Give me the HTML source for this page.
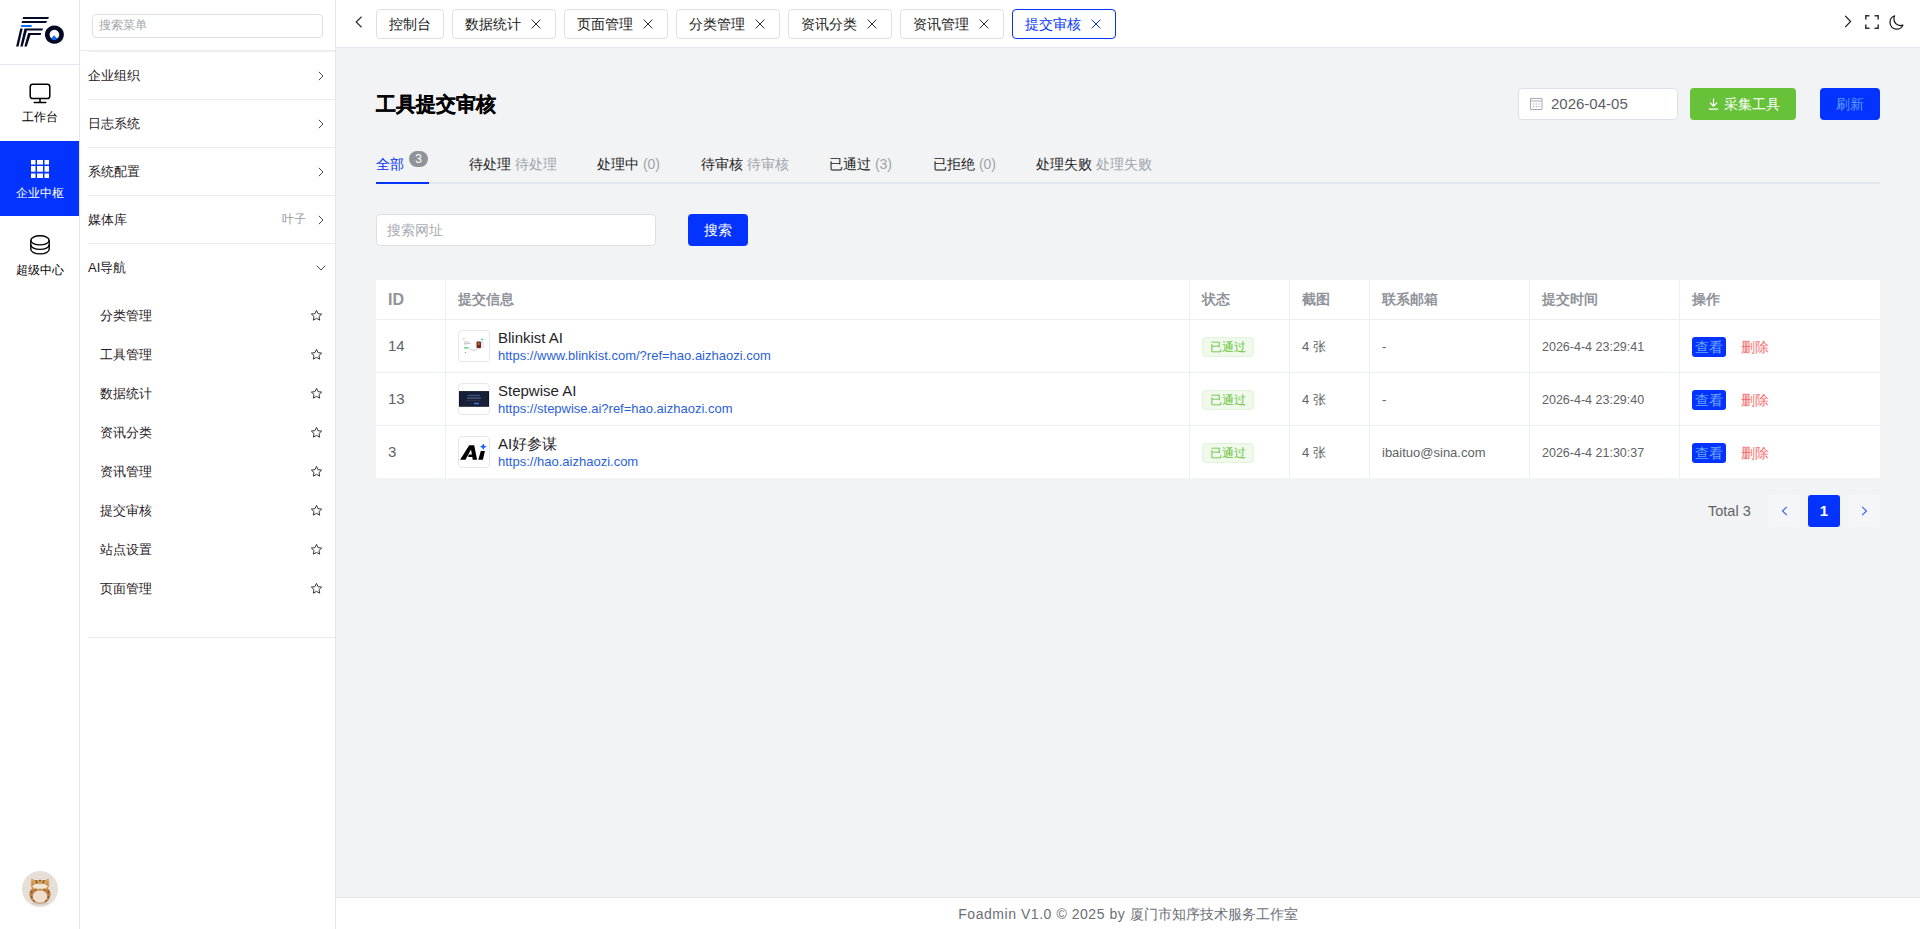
<!DOCTYPE html>
<html><head><meta charset="utf-8">
<style>
*{box-sizing:border-box;margin:0;padding:0}
html,body{width:1920px;height:929px;overflow:hidden}
body{position:relative;background:#f2f3f5;font-family:"Liberation Sans",sans-serif;color:#303133;font-size:14px}
.a{position:absolute}
.rail{left:0;top:0;width:80px;height:929px;background:#fff;border-right:1px solid #e4e6eb}
.rail .hr{left:0;top:64px;width:79px;height:1px;background:#e4e6eb}
.ri{left:0;width:79px;text-align:center;font-size:12px;color:#000;line-height:14px}
.ri.act{background:#0433ff;color:#fff}
.side{left:80px;top:0;width:256px;height:929px;background:#fff;border-right:1px solid #e4e6eb}
.sinput{left:12px;top:14px;width:231px;height:24px;border:1px solid #dcdfe6;border-radius:4px;font-size:12px;color:#a3a6ad;padding-left:6px;line-height:20px}
.shr{height:1px;background:#e9ebef}
.mi{left:8px;width:247px;font-size:13px;color:#1f2024;line-height:16px}
.chev{position:absolute}
.sub{left:20px;font-size:13px;color:#1f2024;line-height:16px}
.star{position:absolute;left:211px}
.hdr{left:336px;top:0;width:1584px;height:48px;background:#fff;border-bottom:1px solid #e4e6eb}
.tab{top:9px;height:30px;border:1px solid #dcdfe6;border-radius:4px;background:#fff;font-size:14px;line-height:28px;padding-left:12px;color:#1a1a1a;white-space:nowrap}
.tab.act{border-color:#0433ff;color:#0433ff}
.tab svg{position:absolute;top:9px}
.ftr{left:336px;top:897px;width:1584px;height:32px;background:#fff;border-top:1px solid #e4e6eb;text-align:center;font-size:14px;color:#6b6f76;line-height:32px}

.title{left:376px;top:92px;font-size:20px;font-weight:700;color:#000;line-height:24px;-webkit-text-stroke:0.25px #000}
.dp{left:1518px;top:88px;width:160px;height:32px;background:#fff;border:1px solid #dcdfe6;border-radius:4px}
.btn{height:32px;border-radius:4px;text-align:center;line-height:32px;font-size:14px}
.ct{top:156px;font-size:14px;line-height:16px;color:#222;white-space:nowrap}
.ct .g{color:#a0a3aa}
.tabline{left:376px;top:182px;width:1504px;height:2px;background:#e4e7ed}
.sin{left:376px;top:214px;width:280px;height:32px;background:#fff;border:1px solid #dcdfe6;border-radius:4px;font-size:14px;color:#a8abb2;line-height:30px;padding-left:10px}
.tbl{left:376px;top:280px;width:1504px;height:198px;background:#fff}
.vl{top:0;width:1px;height:198px;background:#ebeef5}
.hl{left:0;width:1504px;height:1px;background:#ebeef5}
.th{top:11px;font-size:14px;font-weight:700;color:#909399;line-height:16px}
.td{font-size:13px;color:#606266;line-height:16px;white-space:nowrap}
.thumb{left:82px;width:32px;height:32px;border:1px solid #e4e7ed;border-radius:4px;background:#fff;overflow:hidden}
.nm{left:122px;font-size:15px;color:#1f2329;line-height:18px;white-space:nowrap}
.url{left:122px;font-size:13px;color:#2b5fd9;line-height:16px;white-space:nowrap}
.tag{left:826px;width:52px;height:20px;background:#f0f9eb;border:1px solid #e1f3d8;border-radius:4px;color:#67c23a;font-size:12px;text-align:center;line-height:18px}
.vbtn{left:1316px;width:34px;height:20px;background:#0433ff;border-radius:3px;color:#6aa8ff;font-size:14px;text-align:center;line-height:20px}
.del{left:1365px;color:#f56c6c;font-size:14px;line-height:20px}
.pg{top:495px;width:32px;height:32px;border-radius:3px;text-align:center;line-height:32px}
</style></head><body>

<!-- rail -->
<div class="a rail">
  <svg class="a" style="left:0;top:0" width="79" height="64" viewBox="0 0 79 64">
    <g fill="#050a24">
      <path d="M23.2 17h25.8l-0.9 2h-25.6z"/>
      <path d="M22.2 21h24.8l-0.9 2h-24.6z"/>
      <path d="M20.3 28.6H22.7L18.5 46.4H16.1Z"/>
      <path d="M24.5 28.4H43.2L42.2 30.5H26.9L22.7 46.4H20.3Z"/>
      <path d="M28.1 33.1H41.3L40.6 34.9H30.5L26.8 46.4H24.4Z"/>
      <path fill-rule="evenodd" d="M54.4 25.5a9.5 9.1 0 1 1 -0.01 0zM54.4 29.8a4.8 4.8 0 1 0 0.01 0z"/>
    </g>
    <path fill="#0a6cff" d="M21.3 25h10.5l-0.3 2h-10.5z"/>
    <path fill="#0a6cff" d="M54.1 35.3l3.2 3.4a4.8 4.8 0 0 1 -6.4 0z"/>
  </svg>
  <div class="a hr"></div>

  <div class="a ri" style="top:76px;height:60px">
    <svg class="a" style="left:29px;top:83px;top:7px" width="22" height="21" viewBox="0 0 22 21">
      <rect x="1.2" y="1.2" width="19.6" height="14.3" rx="2.6" fill="none" stroke="#000" stroke-width="1.5"/>
      <path d="M11 15.5v4M5.2 19.4h11.6" stroke="#000" stroke-width="1.5" fill="none" stroke-linecap="round"/>
    </svg>
    <div class="a" style="left:0;top:34px;width:79px">工作台</div>
  </div>

  <div class="a ri act" style="top:141px;height:75px">
    <svg class="a" style="left:31px;top:19px" width="18" height="18" viewBox="0 0 18 18" fill="#fff">
      <rect x="0" y="0" width="4.5" height="4.5"/><rect x="6" y="0" width="6" height="4.5"/><rect x="13.5" y="0" width="4.5" height="4.5"/>
      <rect x="0" y="6" width="4.5" height="5.7"/><rect x="6" y="6" width="6" height="5.7"/><rect x="13.5" y="6" width="4.5" height="5.7"/>
      <rect x="0" y="13.5" width="4.5" height="4.5"/><rect x="6" y="13.5" width="6" height="4.5"/><rect x="13.5" y="13.5" width="4.5" height="4.5"/>
    </svg>
    <div class="a" style="left:0;top:45px;width:79px">企业中枢</div>
  </div>

  <div class="a ri" style="top:228px;height:60px">
    <svg class="a" style="left:29px;top:6px" width="22" height="22" viewBox="0 0 22 22">
      <g fill="none" stroke="#000" stroke-width="1.4">
        <ellipse cx="11" cy="6.3" rx="9.2" ry="4.6"/>
        <path d="M1.8 6.3v9c0 2.5 4.1 4.6 9.2 4.6s9.2-2.1 9.2-4.6v-9"/>
        <path d="M1.8 10.8c0 2.5 4.1 4.6 9.2 4.6s9.2-2.1 9.2-4.6"/>
      </g>
    </svg>
    <div class="a" style="left:0;top:35px;width:79px">超级中心</div>
  </div>

  <svg class="a" style="left:22px;top:871px" width="36" height="36" viewBox="0 0 36 36">
    <circle cx="18" cy="18" r="18" fill="#e6dfd8"/>
    <ellipse cx="18" cy="32.5" rx="9" ry="1.2" fill="#cfc6bd"/>
    <path d="M7.5 23c0-5 3.5-7.5 10.5-7.5s10.5 2.5 10.5 7.5c0 5.5-4 9.5-10.5 9.5S7.5 28.5 7.5 23z" fill="#b98244"/>
    <ellipse cx="18" cy="25.5" rx="7.3" ry="6.3" fill="#efdfcf"/>
    <path d="M9.5 7l2.5 2h12l2.5-2 0.8 6.5c0.4 3.5-3.5 6-9.3 6s-9.7-2.5-9.3-6z" fill="#d9a058"/>
    <ellipse cx="18" cy="15.3" rx="7.5" ry="2.6" fill="#f1e6da"/>
    <circle cx="14.8" cy="11.3" r="0.9" fill="#3d4a55"/><circle cx="21.2" cy="11.3" r="0.9" fill="#3d4a55"/>
    <path d="M17 12.5h2l-1 1z" fill="#c98a4a"/>
    <g fill="#6b3f1c"><circle cx="14" cy="9.8" r="0.7"/><circle cx="18" cy="9.6" r="0.8"/><circle cx="22" cy="9.8" r="0.7"/><circle cx="11" cy="13" r="0.6"/><circle cx="25" cy="13" r="0.6"/><circle cx="9.5" cy="21" r="0.8"/><circle cx="26.5" cy="21" r="0.8"/><circle cx="9.8" cy="26" r="0.8"/><circle cx="26.2" cy="26" r="0.8"/><circle cx="12" cy="30" r="0.8"/><circle cx="24" cy="30" r="0.8"/><circle cx="14" cy="18.5" r="0.7"/><circle cx="22" cy="18.5" r="0.7"/><circle cx="18" cy="18" r="0.6"/></g>
  </svg>
</div>

<!-- sidebar -->
<div class="a side">
  <div class="a sinput">搜索菜单</div>
  <div class="a shr" style="left:0;top:50px;width:255px"></div>
  <div class="a shr" style="left:8px;top:51px;width:247px;background:#eef0f3"></div>

  <div class="a mi" style="top:68px">企业组织<svg class="chev" style="left:230px;top:3px" width="6" height="10" viewBox="0 0 6 10"><path d="M0.8 0.8L5 5L0.8 9.2" fill="none" stroke="#4a4c52" stroke-width="1"/></svg></div>
  <div class="a shr" style="left:8px;top:99px;width:247px"></div>
  <div class="a mi" style="top:116px">日志系统<svg class="chev" style="left:230px;top:3px" width="6" height="10" viewBox="0 0 6 10"><path d="M0.8 0.8L5 5L0.8 9.2" fill="none" stroke="#4a4c52" stroke-width="1"/></svg></div>
  <div class="a shr" style="left:8px;top:147px;width:247px"></div>
  <div class="a mi" style="top:164px">系统配置<svg class="chev" style="left:230px;top:3px" width="6" height="10" viewBox="0 0 6 10"><path d="M0.8 0.8L5 5L0.8 9.2" fill="none" stroke="#4a4c52" stroke-width="1"/></svg></div>
  <div class="a shr" style="left:8px;top:195px;width:247px"></div>
  <div class="a mi" style="top:212px">媒体库<span class="a" style="left:194px;top:-1px;font-size:12px;color:#9a9ca3">叶子</span><svg class="chev" style="left:230px;top:3px" width="6" height="10" viewBox="0 0 6 10"><path d="M0.8 0.8L5 5L0.8 9.2" fill="none" stroke="#4a4c52" stroke-width="1"/></svg></div>
  <div class="a shr" style="left:8px;top:243px;width:247px"></div>
  <div class="a mi" style="top:260px">AI导航<svg class="chev" style="left:228px;top:5px" width="10" height="6" viewBox="0 0 10 6"><path d="M0.8 0.8L5 5L9.2 0.8" fill="none" stroke="#4a4c52" stroke-width="1"/></svg></div>
  <div class="a sub" style="top:308px;width:235px">分类管理<svg class="star" style="top:1px;left:210px" width="13" height="13" viewBox="0 0 24 24"><path d="M12 2.5l2.9 6.1 6.6.8-4.9 4.6 1.3 6.6L12 17.3l-5.9 3.3 1.3-6.6-4.9-4.6 6.6-.8z" fill="none" stroke="#303133" stroke-width="1.8" stroke-linejoin="round"/></svg></div>
  <div class="a sub" style="top:347px;width:235px">工具管理<svg class="star" style="top:1px;left:210px" width="13" height="13" viewBox="0 0 24 24"><path d="M12 2.5l2.9 6.1 6.6.8-4.9 4.6 1.3 6.6L12 17.3l-5.9 3.3 1.3-6.6-4.9-4.6 6.6-.8z" fill="none" stroke="#303133" stroke-width="1.8" stroke-linejoin="round"/></svg></div>
  <div class="a sub" style="top:386px;width:235px">数据统计<svg class="star" style="top:1px;left:210px" width="13" height="13" viewBox="0 0 24 24"><path d="M12 2.5l2.9 6.1 6.6.8-4.9 4.6 1.3 6.6L12 17.3l-5.9 3.3 1.3-6.6-4.9-4.6 6.6-.8z" fill="none" stroke="#303133" stroke-width="1.8" stroke-linejoin="round"/></svg></div>
  <div class="a sub" style="top:425px;width:235px">资讯分类<svg class="star" style="top:1px;left:210px" width="13" height="13" viewBox="0 0 24 24"><path d="M12 2.5l2.9 6.1 6.6.8-4.9 4.6 1.3 6.6L12 17.3l-5.9 3.3 1.3-6.6-4.9-4.6 6.6-.8z" fill="none" stroke="#303133" stroke-width="1.8" stroke-linejoin="round"/></svg></div>
  <div class="a sub" style="top:464px;width:235px">资讯管理<svg class="star" style="top:1px;left:210px" width="13" height="13" viewBox="0 0 24 24"><path d="M12 2.5l2.9 6.1 6.6.8-4.9 4.6 1.3 6.6L12 17.3l-5.9 3.3 1.3-6.6-4.9-4.6 6.6-.8z" fill="none" stroke="#303133" stroke-width="1.8" stroke-linejoin="round"/></svg></div>
  <div class="a sub" style="top:503px;width:235px">提交审核<svg class="star" style="top:1px;left:210px" width="13" height="13" viewBox="0 0 24 24"><path d="M12 2.5l2.9 6.1 6.6.8-4.9 4.6 1.3 6.6L12 17.3l-5.9 3.3 1.3-6.6-4.9-4.6 6.6-.8z" fill="none" stroke="#303133" stroke-width="1.8" stroke-linejoin="round"/></svg></div>
  <div class="a sub" style="top:542px;width:235px">站点设置<svg class="star" style="top:1px;left:210px" width="13" height="13" viewBox="0 0 24 24"><path d="M12 2.5l2.9 6.1 6.6.8-4.9 4.6 1.3 6.6L12 17.3l-5.9 3.3 1.3-6.6-4.9-4.6 6.6-.8z" fill="none" stroke="#303133" stroke-width="1.8" stroke-linejoin="round"/></svg></div>
  <div class="a sub" style="top:581px;width:235px">页面管理<svg class="star" style="top:1px;left:210px" width="13" height="13" viewBox="0 0 24 24"><path d="M12 2.5l2.9 6.1 6.6.8-4.9 4.6 1.3 6.6L12 17.3l-5.9 3.3 1.3-6.6-4.9-4.6 6.6-.8z" fill="none" stroke="#303133" stroke-width="1.8" stroke-linejoin="round"/></svg></div>
  <div class="a shr" style="left:8px;top:637px;width:247px"></div>
</div>

<!-- header -->
<div class="a hdr">
<svg class="a" style="left:19px;top:16px" width="8" height="12" viewBox="0 0 8 12"><path d="M6.5 0.8L1.2 6L6.5 11.2" fill="none" stroke="#303133" stroke-width="1.2"/></svg>
  <div class="a tab" style="left:40px;width:68px">控制台</div>
  <div class="a tab" style="left:116px;width:104px">数据统计<svg style="left:78px" width="10" height="10" viewBox="0 0 10 10"><path d="M0.6 0.6L9.4 9.4M9.4 0.6L0.6 9.4" stroke="#303133" stroke-width="1"/></svg></div>
  <div class="a tab" style="left:228px;width:104px">页面管理<svg style="left:78px" width="10" height="10" viewBox="0 0 10 10"><path d="M0.6 0.6L9.4 9.4M9.4 0.6L0.6 9.4" stroke="#303133" stroke-width="1"/></svg></div>
  <div class="a tab" style="left:340px;width:104px">分类管理<svg style="left:78px" width="10" height="10" viewBox="0 0 10 10"><path d="M0.6 0.6L9.4 9.4M9.4 0.6L0.6 9.4" stroke="#303133" stroke-width="1"/></svg></div>
  <div class="a tab" style="left:452px;width:104px">资讯分类<svg style="left:78px" width="10" height="10" viewBox="0 0 10 10"><path d="M0.6 0.6L9.4 9.4M9.4 0.6L0.6 9.4" stroke="#303133" stroke-width="1"/></svg></div>
  <div class="a tab" style="left:564px;width:104px">资讯管理<svg style="left:78px" width="10" height="10" viewBox="0 0 10 10"><path d="M0.6 0.6L9.4 9.4M9.4 0.6L0.6 9.4" stroke="#303133" stroke-width="1"/></svg></div>
  <div class="a tab act" style="left:676px;width:104px">提交审核<svg style="left:78px" width="10" height="10" viewBox="0 0 10 10"><path d="M0.6 0.6L9.4 9.4M9.4 0.6L0.6 9.4" stroke="#0433ff" stroke-width="1"/></svg></div>
  <svg class="a" style="left:1508px;top:15px" width="8" height="13" viewBox="0 0 8 13"><path d="M1.2 0.8L6.6 6.5L1.2 12.2" fill="none" stroke="#1d1d1f" stroke-width="1.2"/></svg>
  <svg class="a" style="left:1529px;top:15px" width="14" height="14" viewBox="0 0 14 14"><path d="M0.8 4.5V0.8H4.5M9.5 0.8H13.2V4.5M13.2 9.5V13.2H9.5M4.5 13.2H0.8V9.5" fill="none" stroke="#333" stroke-width="1.5"/></svg>
  <svg class="a" style="left:1553px;top:15px" width="15" height="15" viewBox="0 0 15 15"><path d="M5.6 0.8C3 1.8 1 4.4 1 7.6c0 3.8 3.1 6.6 6.7 6.6 2.8 0 5.2-1.6 6.2-4.1-0.7 0.3-1.6 0.5-2.4 0.5-3.7 0-6.6-3-6.6-6.6 0-1.1 0.2-2.2 0.7-3.2z" fill="none" stroke="#111" stroke-width="1.2" stroke-linejoin="round"/></svg>
</div>


<!-- content -->
<div class="a title">工具提交审核</div>
<div class="a dp">
  <svg class="a" style="left:11px;top:9px" width="13" height="13" viewBox="0 0 13 13"><g fill="none" stroke="#a8abb2" stroke-width="1"><path d="M0.5 0.5h11.5v11h-11.5z"/><path d="M0.5 3h11.5"/></g><g fill="#a8abb2"><rect x="2.8" y="5.5" width="1.3" height="1"/><rect x="5.6" y="5.5" width="1.3" height="1"/><rect x="8.4" y="5.5" width="1.3" height="1"/><rect x="2.8" y="8" width="1.3" height="1"/><rect x="5.6" y="8" width="1.3" height="1"/><rect x="8.4" y="8" width="1.3" height="1"/></g></svg>
  <div class="a" style="left:32px;top:6px;font-size:15px;color:#5b5e66;line-height:17px">2026-04-05</div>
</div>
<div class="a btn" style="left:1690px;top:88px;width:106px;background:#67c23a;color:#fff">
  <svg class="a" style="left:18px;top:10px" width="11" height="12" viewBox="0 0 11 12"><path d="M5.5 0.5v7.5M2 4.8l3.5 3.4L9 4.8M0.8 11.2h9.4" fill="none" stroke="#fff" stroke-width="1.2"/></svg>
  <span class="a" style="left:34px;top:0">采集工具</span>
</div>
<div class="a btn" style="left:1820px;top:88px;width:60px;background:#0433ff;color:#5c9dff">刷新</div>

<div class="a ct" style="left:376px;color:#0433ff">全部</div>
<div class="a" style="left:409px;top:151px;width:19px;height:16px;border-radius:8px;background:#909399;color:#fff;font-size:12px;text-align:center;line-height:16px">3</div>
<div class="a ct" style="left:469px">待处理 <span class="g">待处理</span></div>
<div class="a ct" style="left:597px">处理中 <span class="g">(0)</span></div>
<div class="a ct" style="left:701px">待审核 <span class="g">待审核</span></div>
<div class="a ct" style="left:829px">已通过 <span class="g">(3)</span></div>
<div class="a ct" style="left:933px">已拒绝 <span class="g">(0)</span></div>
<div class="a ct" style="left:1036px">处理失败 <span class="g">处理失败</span></div>
<div class="a tabline"></div>
<div class="a" style="left:376px;top:182px;width:53px;height:2px;background:#0433ff"></div>

<div class="a sin">搜索网址</div>
<div class="a btn" style="left:688px;top:214px;width:60px;background:#0433ff;color:#fff">搜索</div>

<div class="a tbl">
  <div class="a vl" style="left:69px"></div>
  <div class="a vl" style="left:813px"></div>
  <div class="a vl" style="left:913px"></div>
  <div class="a vl" style="left:993px"></div>
  <div class="a vl" style="left:1153px"></div>
  <div class="a vl" style="left:1303px"></div>
  <div class="a hl" style="top:39px"></div>
  <div class="a hl" style="top:92px"></div>
  <div class="a hl" style="top:145px"></div>
  <div class="a th" style="left:12px;font-size:16px;top:12px">ID</div>
  <div class="a th" style="left:82px">提交信息</div>
  <div class="a th" style="left:826px">状态</div>
  <div class="a th" style="left:926px">截图</div>
  <div class="a th" style="left:1006px">联系邮箱</div>
  <div class="a th" style="left:1166px">提交时间</div>
  <div class="a th" style="left:1316px">操作</div>
  <div class="a td" style="left:12px;top:58px;font-size:15px">14</div>
  <div class="a thumb" style="top:50px"><svg width="30" height="30" viewBox="0 0 30 30"><rect x="3" y="7.6" width="3" height="0.8" fill="#9bdcb1"/><rect x="22" y="7.8" width="2.2" height="1.2" rx="0.6" fill="#3ecf7a"/><rect x="5" y="10.4" width="5" height="0.9" fill="#c9c9c9"/><rect x="5" y="11.8" width="6.7" height="0.9" fill="#b5b5b5"/><rect x="5" y="13.2" width="3.5" height="0.7" fill="#d8d8d8"/><rect x="5" y="16" width="4.8" height="1.7" rx="0.5" fill="#79d99c"/><rect x="16.5" y="9.8" width="8.4" height="7" fill="#e3ecf8"/><rect x="17.6" y="10.4" width="4.4" height="6.8" rx="1" fill="#7a2a1c"/><rect x="18.8" y="11.6" width="1.8" height="2.4" fill="#b8742e"/><path d="M11 18.4q3.5 1.6 7.3 0" stroke="#bfc6cc" stroke-width="0.9" fill="none"/><circle cx="6.4" cy="21.3" r="0.6" fill="#6d7fb0"/></svg></div>
  <div class="a nm" style="top:49px">Blinkist AI</div>
  <div class="a url" style="top:68px">https://www.blinkist.com/?ref=hao.aizhaozi.com</div>
  <div class="a tag" style="top:57px">已通过</div>
  <div class="a td" style="left:926px;top:59px">4 张</div>
  <div class="a td" style="left:1006px;top:59px">-</div>
  <div class="a td" style="left:1166px;top:59px;font-size:12.5px">2026-4-4 23:29:41</div>
  <div class="a vbtn" style="top:57px">查看</div>
  <div class="a del" style="top:57px">删除</div>
  <div class="a td" style="left:12px;top:111px;font-size:15px">13</div>
  <div class="a thumb" style="top:103px"><svg width="30" height="30" viewBox="0 0 30 30"><rect x="0" y="7.1" width="30" height="15.7" fill="#0f172a"/><rect x="1" y="8" width="28" height="14" fill="#172036"/><rect x="8.6" y="10.8" width="12.4" height="1.3" fill="#3b5283"/><rect x="7.9" y="13.3" width="13.9" height="1.5" fill="#44567d"/><rect x="7" y="16" width="14.4" height="0.7" fill="#333d55"/><rect x="10.2" y="18.9" width="3.8" height="1.2" fill="#1e2a4a"/><rect x="15" y="18.7" width="5" height="1.6" rx="0.6" fill="#3b78e7"/></svg></div>
  <div class="a nm" style="top:102px">Stepwise AI</div>
  <div class="a url" style="top:121px">https://stepwise.ai?ref=hao.aizhaozi.com</div>
  <div class="a tag" style="top:110px">已通过</div>
  <div class="a td" style="left:926px;top:112px">4 张</div>
  <div class="a td" style="left:1006px;top:112px">-</div>
  <div class="a td" style="left:1166px;top:112px;font-size:12.5px">2026-4-4 23:29:40</div>
  <div class="a vbtn" style="top:110px">查看</div>
  <div class="a del" style="top:110px">删除</div>
  <div class="a td" style="left:12px;top:164px;font-size:15px">3</div>
  <div class="a thumb" style="top:156px"><svg width="30" height="30" viewBox="0 0 30 30"><path d="M1.1 22.8L10.2 8.2H15.2L18.1 22.8H13.7L13.3 19.9H9.2L9.8 17.5H12.9L12.0 12.6L6.5 22.8Z" fill="#000"/><path d="M21.8 13.9H25.9L23.9 22.8H19.3Z" fill="#000"/><path d="M24.3 6.4Q24.9 9 27.7 9.6Q24.9 10.2 24.3 13Q23.7 10.2 20.8 9.6Q23.7 9 24.3 6.4Z" fill="#1463ff"/></svg></div>
  <div class="a nm" style="top:155px">AI好参谋</div>
  <div class="a url" style="top:174px">https://hao.aizhaozi.com</div>
  <div class="a tag" style="top:163px">已通过</div>
  <div class="a td" style="left:926px;top:165px">4 张</div>
  <div class="a td" style="left:1006px;top:165px">ibaituo@sina.com</div>
  <div class="a td" style="left:1166px;top:165px;font-size:12.5px">2026-4-4 21:30:37</div>
  <div class="a vbtn" style="top:163px">查看</div>
  <div class="a del" style="top:163px">删除</div>
</div>

<div class="a" style="left:1708px;top:503px;font-size:14.5px;color:#606266;line-height:16px">Total 3</div>
<div class="a pg" style="left:1768px;background:#f5f6f9"><svg style="margin-top:11px" width="7" height="10" viewBox="0 0 7 10"><path d="M5.8 0.8L1.5 5L5.8 9.2" fill="none" stroke="#3a5cff" stroke-width="1.1"/></svg></div>
<div class="a pg" style="left:1808px;background:#0433ff;color:#fff;font-weight:700;font-size:15px">1</div>
<div class="a pg" style="left:1848px;background:#f5f6f9"><svg style="margin-top:11px" width="7" height="10" viewBox="0 0 7 10"><path d="M1.2 0.8L5.5 5L1.2 9.2" fill="none" stroke="#3a5cff" stroke-width="1.1"/></svg></div>

<!-- footer -->
<div class="a ftr"><span style="letter-spacing:0.55px">Foadmin V1.0 © 2025 by </span>厦门市知序技术服务工作室</div>

</body></html>
